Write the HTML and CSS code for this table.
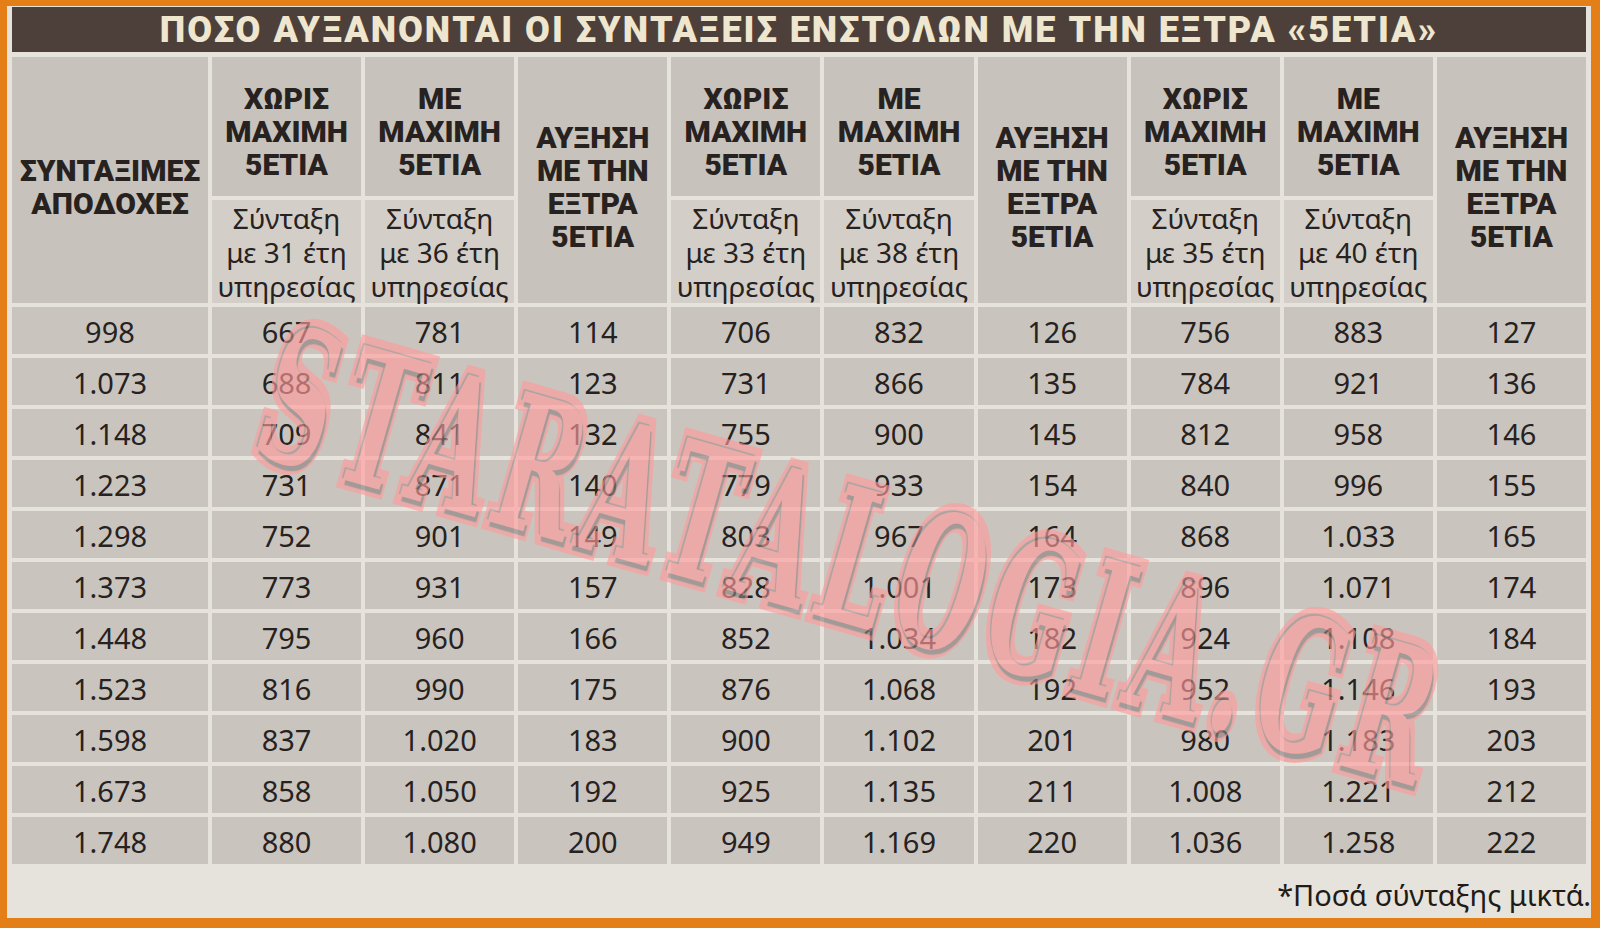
FILE: index.html
```html
<!DOCTYPE html>
<html lang="el">
<head>
<meta charset="utf-8">
<title>ΠΟΣΟ ΑΥΞΑΝΟΝΤΑΙ ΟΙ ΣΥΝΤΑΞΕΙΣ ΕΝΣΤΟΛΩΝ</title>
<link rel="stylesheet" href="styles.css">
</head>
<body>
<div class="sheet">
  <div class="title">ΠΟΣΟ ΑΥΞΑΝΟΝΤΑΙ ΟΙ ΣΥΝΤΑΞΕΙΣ ΕΝΣΤΟΛΩΝ ΜΕ ΤΗΝ ΕΞΤΡΑ «5ΕΤΙΑ»</div>
  <div class="grid">
    <div class="h tall">ΣΥΝΤΑΞΙΜΕΣ<br>ΑΠΟΔΟΧΕΣ</div>
    <div class="h">ΧΩΡΙΣ<br>ΜΑΧΙΜΗ<br>5ΕΤΙΑ</div>
    <div class="h">ΜΕ<br>ΜΑΧΙΜΗ<br>5ΕΤΙΑ</div>
    <div class="h tall">ΑΥΞΗΣΗ<br>ΜΕ ΤΗΝ<br>ΕΞΤΡΑ<br>5ΕΤΙΑ</div>
    <div class="h">ΧΩΡΙΣ<br>ΜΑΧΙΜΗ<br>5ΕΤΙΑ</div>
    <div class="h">ΜΕ<br>ΜΑΧΙΜΗ<br>5ΕΤΙΑ</div>
    <div class="h tall">ΑΥΞΗΣΗ<br>ΜΕ ΤΗΝ<br>ΕΞΤΡΑ<br>5ΕΤΙΑ</div>
    <div class="h">ΧΩΡΙΣ<br>ΜΑΧΙΜΗ<br>5ΕΤΙΑ</div>
    <div class="h">ΜΕ<br>ΜΑΧΙΜΗ<br>5ΕΤΙΑ</div>
    <div class="h tall">ΑΥΞΗΣΗ<br>ΜΕ ΤΗΝ<br>ΕΞΤΡΑ<br>5ΕΤΙΑ</div>

    <div class="sub">Σύνταξη<br>με 31 έτη<br>υπηρεσίας</div>
    <div class="sub">Σύνταξη<br>με 36 έτη<br>υπηρεσίας</div>
    <div class="sub">Σύνταξη<br>με 33 έτη<br>υπηρεσίας</div>
    <div class="sub">Σύνταξη<br>με 38 έτη<br>υπηρεσίας</div>
    <div class="sub">Σύνταξη<br>με 35 έτη<br>υπηρεσίας</div>
    <div class="sub">Σύνταξη<br>με 40 έτη<br>υπηρεσίας</div>

    <div class="c">998</div><div class="c">667</div><div class="c">781</div><div class="c">114</div><div class="c">706</div><div class="c">832</div><div class="c">126</div><div class="c">756</div><div class="c">883</div><div class="c">127</div>
    <div class="c">1.073</div><div class="c">688</div><div class="c">811</div><div class="c">123</div><div class="c">731</div><div class="c">866</div><div class="c">135</div><div class="c">784</div><div class="c">921</div><div class="c">136</div>
    <div class="c">1.148</div><div class="c">709</div><div class="c">841</div><div class="c">132</div><div class="c">755</div><div class="c">900</div><div class="c">145</div><div class="c">812</div><div class="c">958</div><div class="c">146</div>
    <div class="c">1.223</div><div class="c">731</div><div class="c">871</div><div class="c">140</div><div class="c">779</div><div class="c">933</div><div class="c">154</div><div class="c">840</div><div class="c">996</div><div class="c">155</div>
    <div class="c">1.298</div><div class="c">752</div><div class="c">901</div><div class="c">149</div><div class="c">803</div><div class="c">967</div><div class="c">164</div><div class="c">868</div><div class="c">1.033</div><div class="c">165</div>
    <div class="c">1.373</div><div class="c">773</div><div class="c">931</div><div class="c">157</div><div class="c">828</div><div class="c">1.001</div><div class="c">173</div><div class="c">896</div><div class="c">1.071</div><div class="c">174</div>
    <div class="c">1.448</div><div class="c">795</div><div class="c">960</div><div class="c">166</div><div class="c">852</div><div class="c">1.034</div><div class="c">182</div><div class="c">924</div><div class="c">1.108</div><div class="c">184</div>
    <div class="c">1.523</div><div class="c">816</div><div class="c">990</div><div class="c">175</div><div class="c">876</div><div class="c">1.068</div><div class="c">192</div><div class="c">952</div><div class="c">1.146</div><div class="c">193</div>
    <div class="c">1.598</div><div class="c">837</div><div class="c">1.020</div><div class="c">183</div><div class="c">900</div><div class="c">1.102</div><div class="c">201</div><div class="c">980</div><div class="c">1.183</div><div class="c">203</div>
    <div class="c">1.673</div><div class="c">858</div><div class="c">1.050</div><div class="c">192</div><div class="c">925</div><div class="c">1.135</div><div class="c">211</div><div class="c">1.008</div><div class="c">1.221</div><div class="c">212</div>
    <div class="c">1.748</div><div class="c">880</div><div class="c">1.080</div><div class="c">200</div><div class="c">949</div><div class="c">1.169</div><div class="c">220</div><div class="c">1.036</div><div class="c">1.258</div><div class="c">222</div>
  </div>
  <div class="note">*Ποσά σύνταξης μικτά.</div>
  <div class="wm"><span>STARATALOGIA.GR</span></div>
</div>
</body>
</html>
```

FILE: styles.css
```css
html, body {
  margin: 0;
  padding: 0;
}
body {
  width: 1600px;
  height: 928px;
  background: #e47f17;
  overflow: hidden;
}
.sheet {
  position: relative;
  box-sizing: border-box;
  width: 1584px;
  height: 912px;
  margin: 6px 9px 10px 7px;
  padding: 1px 5px 0 5px;
  background: #e6e3dd;
  display: flex;
  flex-direction: column;
  overflow: hidden;
}
.title {
  height: 45px;
  background: #4d403a;
  color: #efe6cf;
  font-family: Roboto, "Noto Sans", sans-serif;
  font-weight: 900;
  font-size: 36px;
  line-height: 47px;
  letter-spacing: 2px;
  text-align: center;
  white-space: nowrap;
}
.grid {
  margin-top: 5px;
  display: grid;
  grid-template-columns: 196px repeat(9, 1fr);
  grid-template-rows: 139px 103px repeat(11, 47px);
  gap: 4px;
}
.h, .sub, .c {
  display: flex;
  align-items: center;
  justify-content: center;
  text-align: center;
  color: #27221f;
}
.h {
  background: #c7c3bc;
  font-family: Roboto, "Noto Sans", sans-serif;
  font-weight: 900;
  font-size: 30px;
  line-height: 33px;
  padding-top: 10px;
  box-sizing: border-box;
}
.h.tall {
  grid-row: span 2;
  padding-top: 14px;
}
.sub {
  background: #d3cfc8;
  font-family: "Noto Sans", sans-serif;
  font-size: 28px;
  line-height: 34px;
  white-space: nowrap;
}
.c {
  background: #c9c5be;
  font-family: "Noto Sans", sans-serif;
  font-size: 29px;
  line-height: 47px;
  padding-top: 2px;
  box-sizing: border-box;
}
.note {
  margin-top: 15px;
  margin-right: -5px;
  text-align: right;
  font-family: "Noto Sans", sans-serif;
  font-size: 29px;
  line-height: 32px;
  color: #1e1b19;
}
.wm {
  position: absolute;
  left: 846px;
  top: 552px;
  width: 0;
  height: 0;
  display: flex;
  align-items: center;
  justify-content: center;
  transform: rotate(16deg) scale(0.82, 1.55);
  opacity: 0.64;
  pointer-events: none;
}
.wm span {
  white-space: nowrap;
  font-family: "DejaVu Serif", serif;
  font-weight: 700;
  font-size: 120px;
  line-height: 1;
  letter-spacing: 12px;
  color: #ff9c9c;
  -webkit-text-stroke: 12px #ff9c9c;
  paint-order: stroke fill;
  text-shadow: 3px 3px 1px #8c8282, -2px -1px 1px #9a9090;
}
```
